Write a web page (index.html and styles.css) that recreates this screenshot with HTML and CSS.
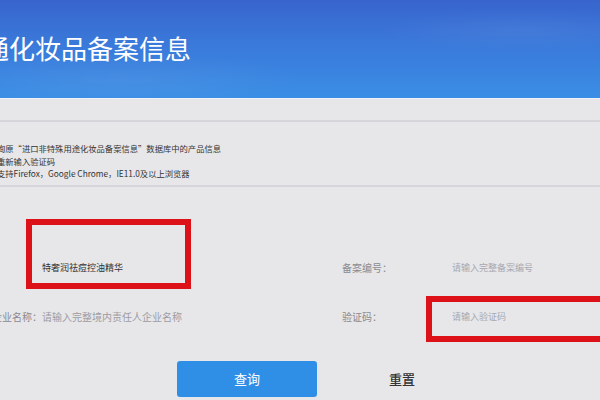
FILE: index.html
```html
<!DOCTYPE html>
<html lang="zh-CN">
<head>
<meta charset="utf-8">
<title>普通化妆品备案信息</title>
<link rel="stylesheet" href="styles.css">
</head>
<body>
<div class="page">
  <header class="banner">
    <h1 class="title">通化妆品备案信息</h1>
  </header>

  <section class="notice">
    <p>询原“进口非特殊用途化妆品备案信息”数据库中的产品信息</p>
    <p>重新输入验证码</p>
    <p>支持Firefox，Google Chrome，IE11.0及以上浏览器</p>
  </section>

  <form class="form">
    <div class="row">
      <span class="label">产品名称：</span>
      <span class="value">特奢润祛痘控油精华</span>
      <span class="label">备案编号：</span>
      <span class="ph ph-sm">请输入完整备案编号</span>
    </div>
    <div class="row">
      <span class="label">境内责任人企业名称：</span>
      <span class="ph">请输入完整境内责任人企业名称</span>
      <span class="label">验证码：</span>
      <span class="ph ph-sm">请输入验证码</span>
    </div>
    <div class="actions">
      <button type="button" class="btn btn-primary">查询</button>
      <button type="button" class="btn btn-plain">重置</button>
    </div>
  </form>

  <div class="mark mark-name"></div>
  <div class="mark mark-code"></div>
</div>
</body>
</html>
```

FILE: styles.css
```css
html, body {
  margin: 0;
  padding: 0;
}
body {
  width: 600px;
  height: 400px;
  overflow: hidden;
  background: #e7e7e9;
  font-family: "Noto Sans CJK SC", "Noto Sans", sans-serif;
  color: #333;
}
.page {
  position: relative;
  width: 600px;
  height: 400px;
  overflow: hidden;
}
.banner {
  height: 98px;
  background:
    radial-gradient(ellipse 260px 40px at 120px 80px, rgba(255,255,255,0.06), rgba(255,255,255,0) 70%),
    radial-gradient(ellipse 200px 30px at 520px 30px, rgba(255,255,255,0.05), rgba(255,255,255,0) 70%),
    linear-gradient(180deg, #3865cd 0%, #3a79da 45%, #3a8ee5 100%);
  border-bottom: 1px solid #eef1f6;
  display: flex;
  align-items: center;
}
.title {
  margin: 0 0 0 -17px;
  font-size: 26px;
  font-weight: 400;
  color: #ffffff;
  line-height: 1;
  padding-bottom: 2px;
  white-space: nowrap;
}
.notice {
  margin-top: 21px;
  border-top: 2px solid #d6d6da;
  border-bottom: 2px solid #d6d6da;
  padding: 20px 0 5px 0;
  margin-left: -3px;
}
.notice p {
  margin: 0;
  font-size: 8.3px;
  line-height: 12.5px;
  color: #333;
  white-space: nowrap;
}
.form {
  margin: 56px 0 0 -58px;
  width: 700px;
}
.row {
  display: grid;
  grid-template-columns: 100px 300px 110px 1fr;
  height: 49px;
  align-items: center;
}
.label {
  font-size: 10px;
  color: #8a8a90;
  white-space: nowrap;
}
.value {
  font-size: 9px;
  color: #333;
  white-space: nowrap;
}
.ph {
  font-size: 10px;
  color: #9c9ca4;
  white-space: nowrap;
}
.ph-sm {
  font-size: 9px;
  color: #a8a8b0;
}
.actions {
  display: flex;
  gap: 15px;
  margin: 20px 0 0 235px;
}
.btn {
  width: 140px;
  height: 36px;
  border: 0;
  border-radius: 3px;
  font-family: "Noto Sans CJK SC", "Noto Sans", sans-serif;
  font-size: 13px;
  padding: 0;
  cursor: pointer;
}
.btn-primary {
  background: #2f8fe7;
  color: #ffffff;
}
.btn-plain {
  background: transparent;
  color: #333;
  font-weight: 500;
}
.mark {
  position: absolute;
  border: 6px solid #dd1219;
  box-sizing: border-box;
}
.mark-name {
  left: 26px;
  top: 219px;
  width: 165px;
  height: 70px;
}
.mark-code {
  left: 426px;
  top: 296px;
  width: 190px;
  height: 46px;
}
```
